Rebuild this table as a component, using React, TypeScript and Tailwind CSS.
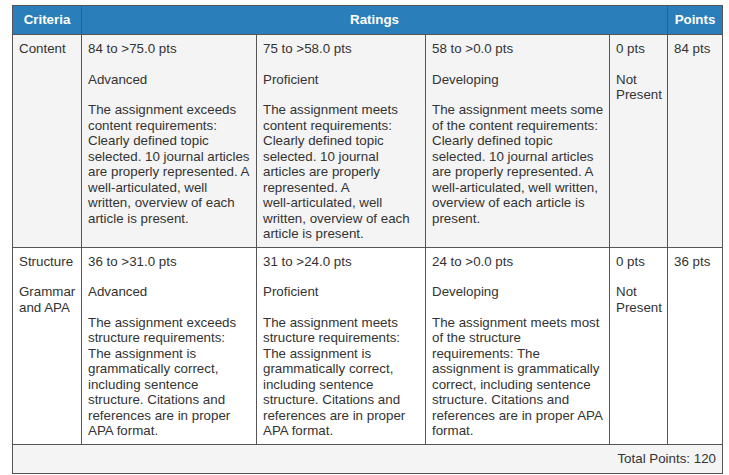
import React from "react";

type Rating = {
  points: string;
  label: string;
  description: string;
};

type Criterion = {
  name: string;
  subtitle?: string;
  ratings: Rating[];
  total: string;
  shaded: boolean;
};

// word joiner after the hyphen keeps "well-articulated" on one line, like the original rubric
const WA = "well-\u2060articulated";

const criteria: Criterion[] = [
  {
    name: "Content",
    shaded: true,
    total: "84 pts",
    ratings: [
      {
        points: "84 to >75.0 pts",
        label: "Advanced",
        description: `The assignment exceeds content requirements: Clearly defined topic selected. 10 journal articles are properly represented. A ${WA}, well written, overview of each article is present.`,
      },
      {
        points: "75 to >58.0 pts",
        label: "Proficient",
        description: `The assignment meets content requirements: Clearly defined topic selected. 10 journal articles are properly represented. A ${WA}, well written, overview of each article is present.`,
      },
      {
        points: "58 to >0.0 pts",
        label: "Developing",
        description: `The assignment meets some of the content requirements: Clearly defined topic selected. 10 journal articles are properly represented. A ${WA}, well written, overview of each article is present.`,
      },
      { points: "0 pts", label: "Not Present", description: "" },
    ],
  },
  {
    name: "Structure",
    subtitle: "Grammar and APA",
    shaded: false,
    total: "36 pts",
    ratings: [
      {
        points: "36 to >31.0 pts",
        label: "Advanced",
        description:
          "The assignment exceeds structure requirements: The assignment is grammatically correct, including sentence structure. Citations and references are in proper APA format.",
      },
      {
        points: "31 to >24.0 pts",
        label: "Proficient",
        description:
          "The assignment meets structure requirements: The assignment is grammatically correct, including sentence structure. Citations and references are in proper APA format.",
      },
      {
        points: "24 to >0.0 pts",
        label: "Developing",
        description:
          "The assignment meets most of the structure requirements: The assignment is grammatically correct, including sentence structure. Citations and references are in proper APA format.",
      },
      { points: "0 pts", label: "Not Present", description: "" },
    ],
  },
];

const cell = "border border-[#555] align-top pl-[6px] pr-[5px] pt-[6px] pb-[5px]";

export default function App() {
  return (
    <div
      className="w-[729px] h-[475px] bg-white pl-[12px] pt-[5px] text-[13.33px] leading-[15.5px] text-[#333]"
      style={{ fontFamily: '"Liberation Sans", Arial, sans-serif' }}
    >
      <table className="border-collapse table-fixed w-[710px] border border-[#555]">
        <colgroup>
          <col className="w-[69px]" />
          <col className="w-[175px]" />
          <col className="w-[169px]" />
          <col className="w-[184px]" />
          <col className="w-[58px]" />
          <col className="w-[55px]" />
        </colgroup>
        <thead>
          <tr className="bg-[#2a7fba] text-white font-bold h-[29px]">
            <th className="border border-[#555] text-center">Criteria</th>
            <th colSpan={4} className="border border-[#555] text-center">
              Ratings
            </th>
            <th className="border border-[#555] text-center">Points</th>
          </tr>
        </thead>
        <tbody>
          {criteria.map((c) => (
            <tr key={c.name} className={c.shaded ? "bg-[#f4f4f4]" : "bg-white"}>
              <td className={cell}>
                <div>{c.name}</div>
                {c.subtitle && <div className="mt-[15px]">{c.subtitle}</div>}
              </td>
              {c.ratings.map((r) => (
                <td key={r.points + r.label} className={cell}>
                  <div>{r.points}</div>
                  <div className="mt-[15px]">{r.label}</div>
                  {r.description && <div className="mt-[15px]">{r.description}</div>}
                </td>
              ))}
              <td className={cell}>{c.total}</td>
            </tr>
          ))}
          <tr className="bg-[#f4f4f4] h-[29px]">
            <td colSpan={6} className="border border-[#555] text-right px-[6px]">
              Total Points: 120
            </td>
          </tr>
        </tbody>
      </table>
    </div>
  );
}
